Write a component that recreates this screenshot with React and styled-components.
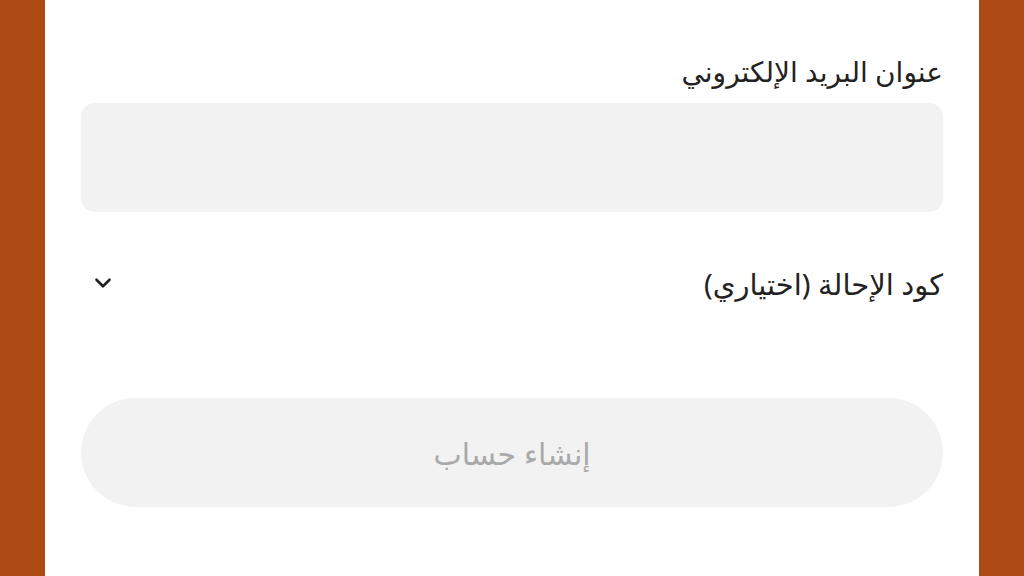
import React from "react";
import styled, { createGlobalStyle } from "styled-components";

const Global = createGlobalStyle`
  html, body { margin: 0; padding: 0; height: 100%; }
  body { font-family: "Noto Sans", "DejaVu Sans", sans-serif; background: #AE4A13; }
  #root { height: 100%; }
`;

const Page = styled.div`
  height: 576px;
  display: flex;
  justify-content: center;
  background: #AE4A13;
`;

const Panel = styled.div`
  width: 934px;
  background: #ffffff;
  padding: 50px 36px 0;
  box-sizing: border-box;
  direction: rtl;
  display: flex;
  flex-direction: column;
`;

const Label = styled.label`
  font-size: 28px;
  line-height: 42px;
  color: #222222;
  margin-bottom: 11px;
`;

const Input = styled.input`
  height: 109px;
  border: none;
  border-radius: 14px;
  background: #F2F2F2;
  outline: none;
  padding: 0 24px;
  font-size: 24px;
  box-sizing: border-box;
  width: 100%;
`;

const Toggle = styled.div`
  margin-top: 52px;
  display: flex;
  align-items: center;
  justify-content: space-between;
  height: 40px;
`;

const ToggleText = styled.span`
  font-size: 29px;
  line-height: 40px;
  color: #222222;
`;

const Chevron = styled.svg`
  width: 26px;
  height: 26px;
  margin-left: 9px;
  margin-top: -2px;
`;

const Button = styled.button`
  margin-top: 94px;
  height: 109px;
  width: 100%;
  border: none;
  border-radius: 55px;
  background: #F2F2F2;
  color: #A9A9A9;
  font-family: inherit;
  font-size: 30px;
  padding-top: 2px;
`;

export default function App() {
  return (
    <>
      <Global />
      <Page>
        <Panel>
          <Label>عنوان البريد الإلكتروني</Label>
          <Input type="email" />
          <Toggle>
            <ToggleText>كود الإحالة (اختياري)</ToggleText>
            <Chevron viewBox="0 0 24 24" fill="none" stroke="#222" strokeWidth="2.4" strokeLinecap="round" strokeLinejoin="round">
              <path d="M6 9l6 6 6-6" />
            </Chevron>
          </Toggle>
          <Button disabled>إنشاء حساب</Button>
        </Panel>
      </Page>
    </>
  );
}
